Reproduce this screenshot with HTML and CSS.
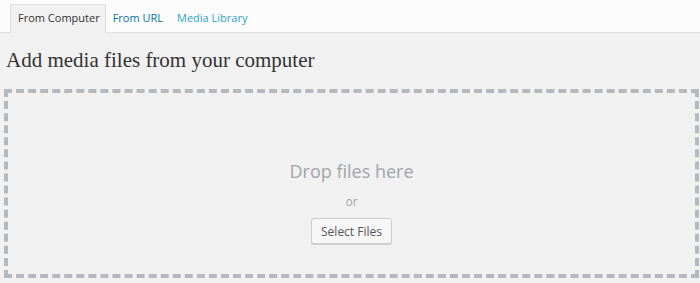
FILE: index.html
```
<!DOCTYPE html>
<html lang="en">
<head>
    <meta charset="UTF-8">
    <title>Add media</title>
    <link rel="stylesheet" href="styles.css">
</head>
<body>
    <div class="media-tabs">
        <a class="tab current" href="#">From Computer</a>
        <a class="tab" href="#">From URL</a>
        <a class="tab library" href="#">Media Library</a>
    </div>

    <div class="upload-panel">
        <h3 class="upload-title">Add media files from your computer</h3>
        <div class="drag-drop">
            <p class="drop-info">Drop files here</p>
            <p class="drop-or">or</p>
            <button class="select-btn" type="button">Select Files</button>
        </div>
    </div>
</body>
</html>
```

FILE: styles.css
```
body {
    margin: 0;
    background: #f1f1f1;
    font-family: "Open Sans", sans-serif;
    font-size: 12px;
    color: #444;
}

/* tabs */
.media-tabs {
    display: flex;
    align-items: flex-end;
    height: 33px;
    padding-left: 10px;
    background: #fcfcfc;
    border-bottom: 1px solid #dfdfdf;
    box-sizing: border-box;
}
.tab {
    display: block;
    padding: 0 7px 0 7px;
    height: 27px;
    line-height: 26px;
    font-size: 11px;
    text-decoration: none;
    color: #0074a2;
}
.tab.current {
    color: #333;
    background: #f1f1f1;
    border: 1px solid #dfdfdf;
    border-bottom: none;
    margin-bottom: -1px;
    height: 28px;
    padding: 0 5px 0 7px;
}
.tab.library {
    color: #2ea2cc;
}

/* uploader */
.upload-panel {
    padding: 0 1px 0 4px;
}
.upload-title {
    margin: 12px 0 0 2px;
    font-family: "Liberation Serif", serif;
    font-weight: normal;
    font-size: 21px;
    line-height: 30px;
    color: #333;
}
.drag-drop {
    margin-top: 14px;
    height: 189px;
    border: 4px dashed #b4b9be;
    box-sizing: border-box;
    display: flex;
    flex-direction: column;
    align-items: center;
    padding-top: 64px;
}
.drop-info {
    margin: 0;
    font-size: 18px;
    line-height: 28px;
    color: #a0a5aa;
}
.drop-or {
    margin: 8px 0 0;
    font-size: 12px;
    line-height: 18px;
    color: #a0a5aa;
}
.select-btn {
    margin-top: 7px;
    height: 26px;
    padding: 0 9px;
    font-family: "Open Sans", sans-serif;
    font-size: 12px;
    color: #555;
    background: #f7f7f7;
    border: 1px solid #ccc;
    border-radius: 3px;
    box-shadow: 0 1px 0 #ccc;
}
```
